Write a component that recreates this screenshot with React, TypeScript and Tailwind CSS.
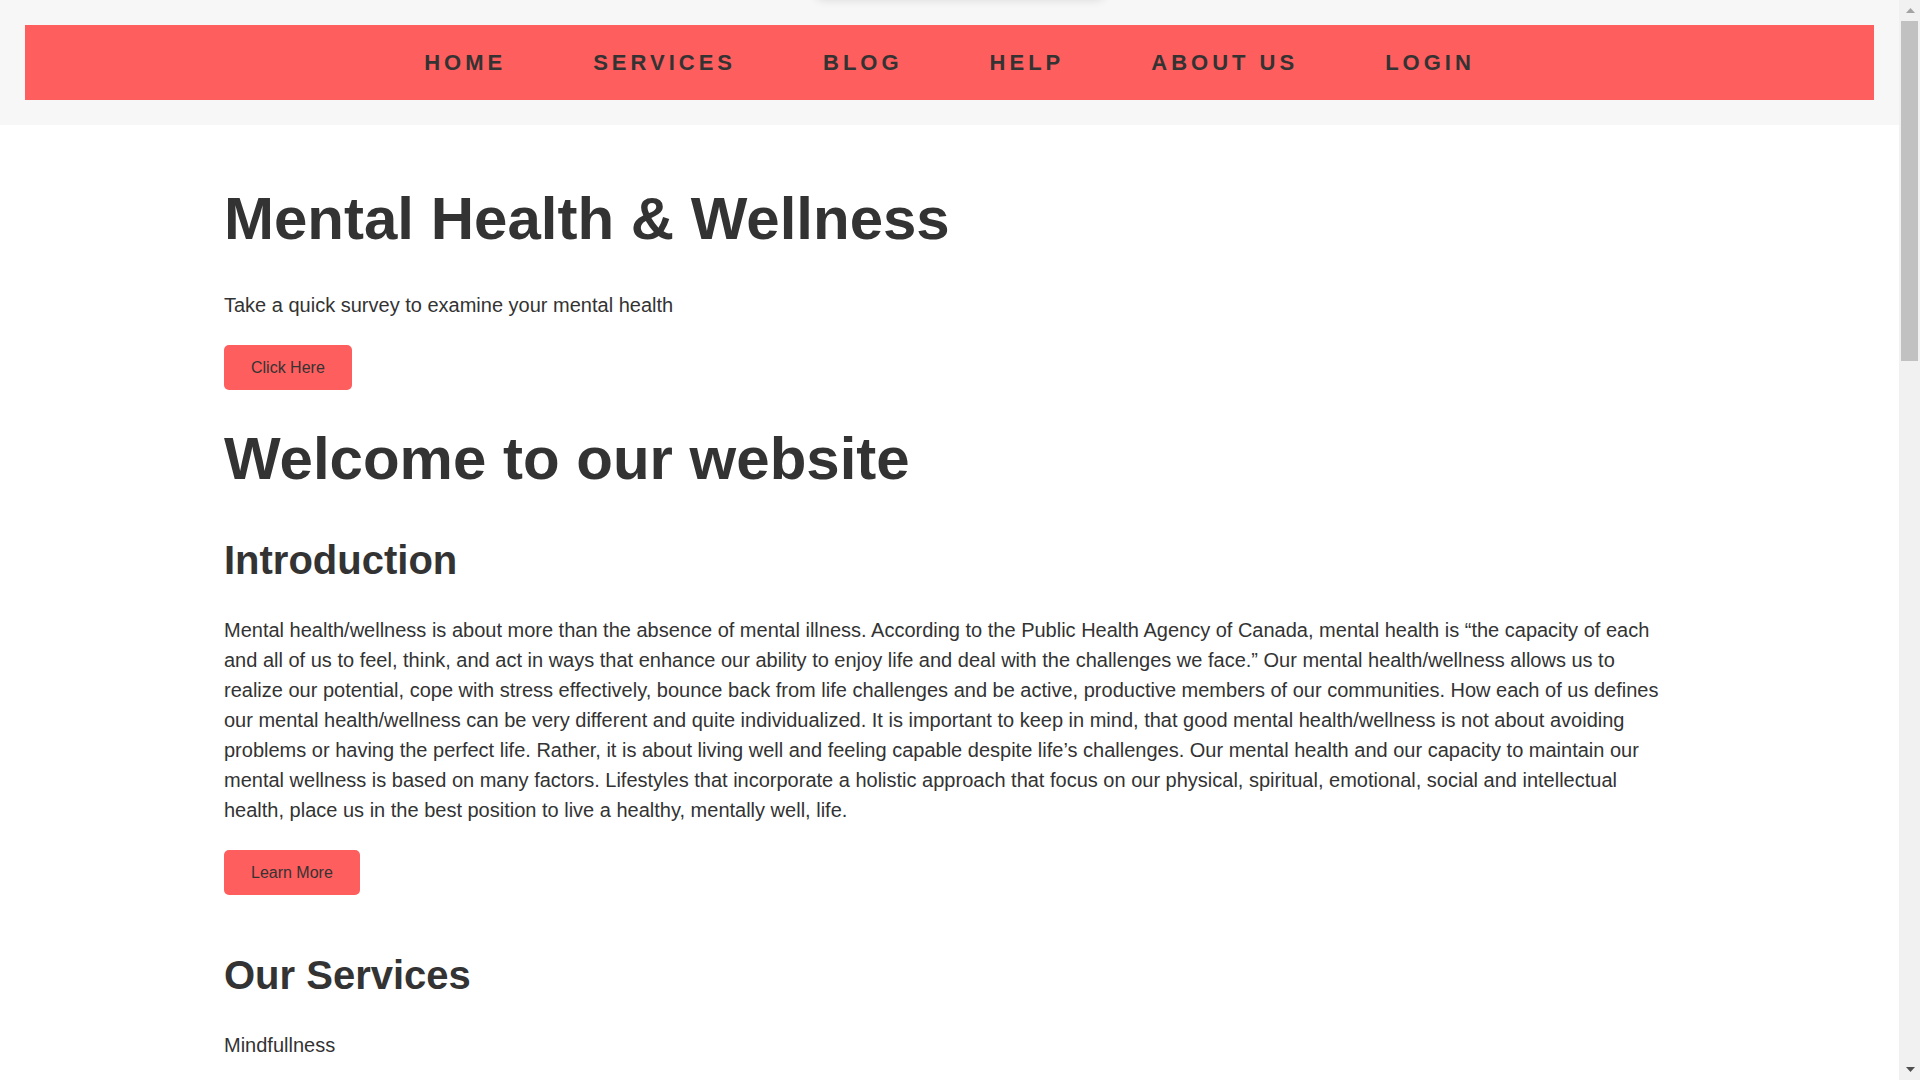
import React from "react";

const navItems = ["HOME", "SERVICES", "BLOG", "HELP", "ABOUT US", "LOGIN"];

function Button({ children }: { children: React.ReactNode }) {
  return (
    <button className="flex h-[45px] items-center rounded-[5px] bg-[#ff5e5e] px-[27px] text-[16px] leading-none text-[#333]">
      {children}
    </button>
  );
}

export default function App() {
  return (
    <div className="flex h-[1080px] w-[1920px] overflow-hidden bg-white font-['Liberation_Sans',Arial,sans-serif] text-[#333]">
      <div className="relative flex w-[1899px] flex-col">
        <div className="pointer-events-none absolute left-[815px] top-[-30px] h-[30px] w-[290px] rounded-[8px] shadow-[0_0_10px_rgba(0,0,0,0.12)]" />
        <header className="h-[125px] bg-[#f7f7f7] p-[25px]">
          <nav className="flex h-[75px] items-center justify-center gap-[87px] bg-[#ff5e5e]">
            {navItems.map((item) => (
              <a
                key={item}
                className="text-[22px] font-bold leading-none tracking-[4px] text-[#333]"
              >
                {item}
              </a>
            ))}
          </nav>
        </header>
        <main className="flex w-[1675px] flex-col items-start pl-[224px]">
          <h1 className="mt-[64px] text-[60px] font-bold leading-[60px]">
            Mental Health &amp; Wellness
          </h1>
          <p className="mt-[41px] text-[20px] leading-[30px]">
            Take a quick survey to examine your mental health
          </p>
          <div className="mt-[25px]">
            <Button>Click Here</Button>
          </div>
          <h1 className="mt-[39px] text-[60px] font-bold leading-[60px]">
            Welcome to our website
          </h1>
          <h2 className="mt-[51px] text-[40px] font-bold leading-[40px]">
            Introduction
          </h2>
          <p className="mt-[35px] text-[20px] leading-[30px]">
            Mental health/wellness is about more than the absence of mental
            illness. According to the Public Health Agency of Canada, mental
            health is “the capacity of each and all of us to feel, think, and
            act in ways that enhance our ability to enjoy life and deal with the
            challenges we face.” Our mental health/wellness allows us to realize
            our potential, cope with stress effectively, bounce back from life
            challenges and be active, productive members of our communities. How
            each of us defines our mental health/wellness can be very different
            and quite individualized. It is important to keep in mind, that good
            mental health/wellness is not about avoiding problems or having the
            perfect life. Rather, it is about living well and feeling capable
            despite life’s challenges. Our mental health and our capacity to
            maintain our mental wellness is based on many factors. Lifestyles
            that incorporate a holistic approach that focus on our physical,
            spiritual, emotional, social and intellectual health, place us in
            the best position to live a healthy, mentally well, life.
          </p>
          <div className="mt-[25px]">
            <Button>Learn More</Button>
          </div>
          <h2 className="mt-[60px] text-[40px] font-bold leading-[40px]">
            Our Services
          </h2>
          <p className="mt-[35px] text-[20px] leading-[30px]">Mindfullness</p>
        </main>
      </div>
      <div className="flex w-[21px] flex-col bg-[#f1f1f1]">
        <div className="flex h-[21px] items-center justify-center pl-[1px]">
          <svg width="9" height="5" viewBox="0 0 9 5">
            <polygon points="4.5,0 9,5 0,5" fill="#a3a3a3" />
          </svg>
        </div>
        <div className="ml-[2px] h-[340px] w-[17px] bg-[#c1c1c1]" />
        <div className="flex-1" />
        <div className="flex h-[21px] items-center justify-center pl-[1px]">
          <svg width="9" height="5" viewBox="0 0 9 5">
            <polygon points="0,0 9,0 4.5,5" fill="#505050" />
          </svg>
        </div>
      </div>
    </div>
  );
}
